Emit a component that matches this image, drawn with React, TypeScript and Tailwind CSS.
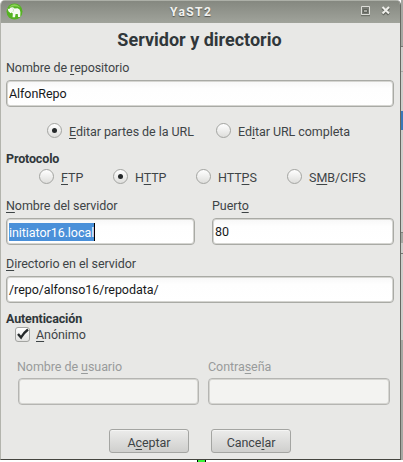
import React from "react";

function Field({ value, selected, disabled, className = "" }: { value?: string; selected?: boolean; disabled?: boolean; className?: string }) {
  return (
    <div
      className={`flex h-[27px] shrink-0 items-center rounded-[4px] border px-[2px] text-[#17191a] ${
        disabled ? "border-[#b5b5b2] bg-[#f3f3f1]" : "border-[#a9aaa5] bg-gradient-to-b from-[#f7f7f7] via-[#fefefe] via-30% to-white"
      } shadow-[inset_0_0_0_1px_#d5d5d1] ${className}`}
    >
      {selected ? (
        <span className="h-[18px] border-r border-black bg-[#4a90d9] leading-[19px] text-white">{value}</span>
      ) : (
        <span className="pt-px leading-[18px]">{value}</span>
      )}
    </div>
  );
}

function Radio({ checked }: { checked?: boolean }) {
  return (
    <span className="flex h-[15px] w-[15px] shrink-0 items-center justify-center rounded-full border border-[#a3a4a1] bg-gradient-to-b from-white to-[#dededc]">
      {checked && <span className="h-[5px] w-[5px] rounded-full bg-[#25292a]" />}
    </span>
  );
}

function Option({ checked, className, children }: { checked?: boolean; className: string; children: React.ReactNode }) {
  return (
    <div className={`flex shrink-0 items-center ${className}`}>
      <Radio checked={checked} />
      <span className="ml-[7px] pt-[2px] leading-[15px]">{children}</span>
    </div>
  );
}

function Key({ children }: { children: React.ReactNode }) {
  return <span className="underline decoration-1 underline-offset-[2px] [text-decoration-skip-ink:none]">{children}</span>;
}

function Button({ children }: { children: React.ReactNode }) {
  return (
    <div className="flex h-[24px] w-[80px] items-center justify-center rounded-[3px] border border-[#a4a5a2] bg-gradient-to-b from-[#ececeb] to-[#cfcfcd] pt-[3px] shadow-[inset_0_1px_0_#f5f5f4]">
      {children}
    </div>
  );
}

export default function App() {
  return (
    <div className="flex h-[462px] w-[403px] flex-col overflow-hidden bg-white font-['Roboto',sans-serif] text-[12.5px] leading-[16px] tracking-[-0.06px] text-[#3e4446]">
      <div className="flex h-[460px]">
        <div className="flex h-[460px] w-[401px] flex-col overflow-hidden rounded-t-[5px] border-b border-l border-r border-b-[#45453f] border-l-[#b3b4ad] border-r-[#666862] bg-[#e8e8e6]">
          <div className="-ml-px flex h-[23px] w-[401px] shrink-0 items-center border-t border-[#adb0a8] bg-gradient-to-b from-[#858880] to-[#a0a39b] pl-[6px]">
            <svg width="18" height="18" viewBox="0 0 18 18" className="shrink-0">
              <circle cx="8.5" cy="8.5" r="8" fill="#55b322" />
              <path d="M2.6 4.6Q8.5-2 14.4 4.6Q8.5 1.8 2.6 4.6z" fill="#8fd05c" />
              <path d="M1.6 5.2L3 6.3L4.6 4.6L7 4.3L8.6 5.4L11.6 5.2Q14.2 6 14.4 9L14.2 14H12L11.8 11H9.6L9 14.2H6.6L6.8 10.4L5.6 9.4L4.4 10.2L3.6 9.2L2.4 8.2z" fill="#f7fbf3" />
              <path d="M6.8 5.4Q8.4 7 6.8 9" fill="none" stroke="#b5dda0" strokeWidth=".7" />
            </svg>
            <div className="ml-[146px] w-[45px] text-[12px] font-bold leading-[16px] tracking-[1.4px] text-[#f1f1ef] [text-shadow:0_1px_1px_#54564f]">YaST2</div>
            <svg width="32" height="12" viewBox="0 0 32 12" className="mb-[2px] ml-[145px] shrink-0">
              <path d="M1.5 1.5h8v8h-8z" fill="#777a73" stroke="#dcddd8" strokeWidth="1" />
              <path d="M3.5 4.5h4v3h-4z" fill="#a4a69f" stroke="#5f625b" />
              <path d="M1 10.7h9" stroke="#666961" />
              <path d="M22.5 3l6.5 6.5m0-6.5L22.5 9.5" stroke="#62655e" strokeWidth="3" />
              <path d="M22.5 2l6.5 6.5m0-6.5l-6.5 6.5" stroke="#efefeb" strokeWidth="2" />
            </svg>
          </div>
          <div className="flex flex-1 flex-col pl-[5px]">
            <h1 className="mt-[6px] h-[22px] pr-[7px] text-center text-[18px] font-bold leading-[22px] tracking-normal text-[#30373a]">Servidor y directorio</h1>
            <div className="mt-[9px]">Nombre de <Key>r</Key>epositorio</div>
            <Field value="AlfonRepo" className="mt-[4px] w-[388px]" />
            <div className="mt-[16px] flex h-[15px] pl-[41px]">
              <Option checked className="w-[169px]"><Key>E</Key>ditar partes de la URL</Option>
              <Option className="w-[140px]">Ed<Key>i</Key>tar URL completa</Option>
            </div>
            <div className="mt-[13px] font-bold tracking-[-0.15px] text-[#30373a]">Protocolo</div>
            <div className="mt-[2px] flex h-[15px] pl-[33px]">
              <Option className="w-[74px]"><Key>F</Key>TP</Option>
              <Option checked className="w-[83px]">H<Key>T</Key>TP</Option>
              <Option className="w-[91px]">HTT<Key>P</Key>S</Option>
              <Option className="w-[90px]">S<Key>M</Key>B/CIFS</Option>
            </div>
            <div className="mt-[14px] flex gap-[17px]">
              <div className="w-[189px]"><Key>N</Key>ombre del servidor</div>
              <div>Puert<Key>o</Key></div>
            </div>
            <div className="mt-[4px] flex gap-[17px]">
              <Field value="initiator16.local" selected className="w-[189px]" />
              <Field value="80" className="w-[182px]" />
            </div>
            <div className="mt-[11px]"><Key>D</Key>irectorio en el servidor</div>
            <Field value="/repo/alfonso16/repodata/" className="mt-[4px] w-[388px]" />
            <div className="mt-[8px] font-bold tracking-[-0.15px] text-[#30373a]">Autenticación</div>
            <div className="flex h-[15px] items-center pl-[9px]">
              <span className="flex h-[15px] w-[15px] items-center justify-center rounded-[3px] border border-[#a3a4a1] bg-gradient-to-b from-white to-[#e2e2e0]">
                <svg width="13" height="13" viewBox="0 0 13 13" className="overflow-visible">
                  <path d="M2 6L5 9.5Q7.5 5 12 1.5" fill="none" stroke="#25292a" strokeWidth="2.4" />
                </svg>
              </span>
              <span className="ml-[6px] pt-px"><Key>A</Key>nónimo</span>
            </div>
            <div className="mt-[17px] flex gap-[9px] pl-[11px] text-[#989b9b]">
              <div className="w-[182px]">Nombre de <Key>u</Key>suario</div>
              <div>Contra<Key>s</Key>eña</div>
            </div>
            <div className="mt-[3px] flex gap-[9px] pl-[12px]">
              <Field disabled className="w-[181px]" />
              <Field disabled className="w-[182px]" />
            </div>
            <div className="mt-[24px] flex gap-[22px] pl-[103px]">
              <Button>A<Key>c</Key>eptar</Button>
              <Button>Cance<Key>l</Key>ar</Button>
            </div>
          </div>
        </div>
        <div className="flex w-[2px] flex-col bg-[#cececb]">
          <div className="h-[47px] border-b border-[#777873] bg-[#a6a8a3]" />
          <div className="h-[25px] border-b border-[#aaaaa7]" />
          <div className="mt-[39px] h-[19px] bg-[#3978b9]" />
          <div className="mt-[102px] h-[11px] border-t border-[#80817c] bg-[#a6a8a3]" />
          <div className="mt-[10px] h-px bg-[#777873]" />
          <div className="mt-[86px] h-[120px] bg-[#a6a8a3]" />
        </div>
      </div>
      <div className="ml-[197px] h-[2px] w-[9px] shrink-0 border-l border-r border-black bg-[#35f535]" />
    </div>
  );
}
